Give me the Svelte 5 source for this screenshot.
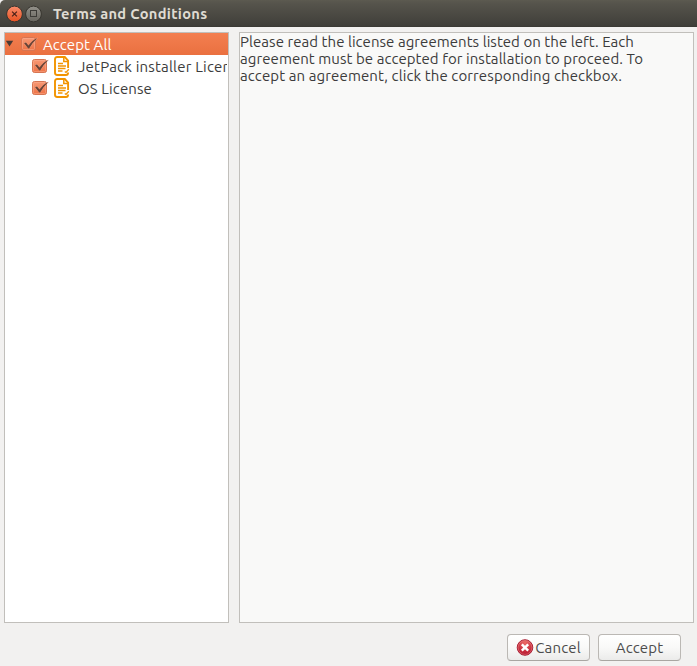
<script>
  const licenses = [
    { name: 'JetPack installer License', width: 168.5 },
    { name: 'OS License', width: 74 }
  ];
  const message = [
    { text: 'Please read the license agreements listed on the left. Each', width: 394 },
    { text: 'agreement must be accepted for installation to proceed. To', width: 403 },
    { text: 'accept an agreement, click the corresponding checkbox.', width: 382 }
  ];

  // Spreads the letters of a label over a given width.
  function fit(node, width) {
    const natural = node.getBoundingClientRect().width;
    node.style.letterSpacing = (width - natural) / node.textContent.length + 'px';
  }
</script>

{#snippet check()}
  <svg class="check" width="18" height="18" viewBox="0 0 18 18">
    <defs>
      <linearGradient id="box" x1="0" y1="0" x2="0" y2="1">
        <stop offset="0" stop-color="#f79a76" />
        <stop offset="1" stop-color="#ee7245" />
      </linearGradient>
    </defs>
    <rect x="0.5" y="2.5" width="14" height="13" rx="2" fill="url(#box)" stroke="#d67552" />
    <rect x="1.5" y="3.5" width="12" height="11" rx="1" fill="none" stroke="#fbb092" stroke-opacity=".5" />
    <path d="M3 8 L5 7.4 L7.5 10.6 Q11 5.4 16.4 3 Q11.6 7.4 8.1 13.4 L7.2 13.4 Z" fill="#684336" stroke="#f8b79e" stroke-opacity=".5" paint-order="stroke" />
  </svg>
{/snippet}

{#snippet page()}
  <svg class="page" width="16" height="20" viewBox="0 0 16 20" fill="none" stroke="#f29400">
    <path d="M14.1 12 V4.6 L10.8 1 H3.2 Q1 1 1 3.2 V16.8 Q1 19 3.2 19 H12 Q14.1 19 14.1 16.4" stroke-width="1.9" />
    <path d="M9.8 1 V5.4 H14" stroke-width="1.5" />
    <path d="M4 7.5 H9 M4 10 H12 M4 12.5 H11.5 M4 15 H8.5" stroke-width="1.3" />
    <path d="M10.8 15.5 L12 16.4 L14.8 13.2" stroke-width="1.3" />
  </svg>
{/snippet}

<div class="window">
  <header>
    <svg width="40" height="18" viewBox="0 0 40 18">
      <defs>
        <linearGradient id="close" x1="0" y1="0" x2="0" y2="1">
          <stop offset="0" stop-color="#f98c6b" />
          <stop offset="1" stop-color="#e75222" />
        </linearGradient>
        <linearGradient id="max" x1="0" y1="0" x2="0" y2="1">
          <stop offset="0" stop-color="#93918a" />
          <stop offset="1" stop-color="#67655e" />
        </linearGradient>
      </defs>
      <circle cx="9.5" cy="9" r="7.9" fill="url(#close)" stroke="#37352f" />
      <path d="M7.1 6.6 l4.8 4.8 M11.9 6.6 l-4.8 4.8" stroke="#4a2118" stroke-width="1.2" />
      <circle cx="28.5" cy="9" r="7.9" fill="url(#max)" stroke="#37352f" />
      <rect x="25.5" y="5.5" width="6" height="6" fill="none" stroke="#3c3b37" />
    </svg>
    <h1><span use:fit={154.5}>Terms and Conditions</span></h1>
  </header>

  <main>
    <section class="tree">
      <div class="row all">
        <svg class="arrow" width="9" height="7" viewBox="0 0 9 7"><path d="M.8 .8 H8.2 L4.5 6.5 Z" fill="#4b3a34" /></svg>
        {@render check()}
        <span class="label"><span use:fit={68.5}>Accept All</span></span>
      </div>
      {#each licenses as license}
        <div class="row child">
          {@render check()}
          {@render page()}
          <span class="label"><span use:fit={license.width}>{license.name}</span></span>
        </div>
      {/each}
    </section>
    <section class="text">
      {#each message as line}
        <div class="line"><span use:fit={line.width}>{line.text}</span></div>
      {/each}
    </section>
  </main>

  <footer>
    <button>
      <svg class="stop" width="18" height="18" viewBox="0 0 18 18">
        <defs>
          <radialGradient id="stop" cx=".5" cy=".2" r=".8">
            <stop offset="0" stop-color="#ec6a66" />
            <stop offset="1" stop-color="#b5102b" />
          </radialGradient>
        </defs>
        <circle cx="9" cy="8.5" r="7.8" fill="url(#stop)" stroke="#a5142a" stroke-width=".9" />
        <circle cx="9" cy="8.5" r="6.9" fill="none" stroke="#f0a09c" stroke-width=".6" stroke-opacity=".7" />
        <path d="M5.8 5.3 L12.2 11.7 M12.2 5.3 L5.8 11.7" stroke="#fff" stroke-width="2.4" />
      </svg>
      <span use:fit={45.5}>Cancel</span>
    </button>
    <button><span use:fit={47.5}>Accept</span></button>
  </footer>
</div>

<style>
  :global(body) { margin: 0; }
  .window {
    width: 697px;
    height: 666px;
    display: flex;
    flex-direction: column;
    box-sizing: border-box;
    overflow: hidden;
    background: #f2f1f0;
    color: #3c3c3c;
    font: 15px/22px Ubuntu, "Noto Sans", sans-serif;
    white-space: nowrap;
  }
  svg { display: block; flex: none; }
  header {
    height: 27px;
    flex: none;
    display: flex;
    align-items: center;
    padding-left: 5px;
    box-sizing: border-box;
    background: linear-gradient(#5c5a50, #56544c 12%, #403f3a 94%, #393833);
    border-radius: 5px 0 0 0;
  }
  h1 {
    margin: 0 0 0 8px;
    font-size: 14.67px;
    font-weight: 700;
    line-height: 26px;
    color: #dfdbd2;
  }
  main {
    flex: 1;
    display: flex;
    gap: 10px;
    padding: 5px 3px 0 4px;
  }
  .tree, .text {
    box-sizing: border-box;
    border: 1px solid #c1bfbb;
    overflow: hidden;
  }
  .tree { width: 225px; flex: none; background: #fff; padding-right: 1px; }
  .text { flex: 1; background: #f9f9f8; }
  .row { height: 22px; display: flex; align-items: center; overflow: hidden; }
  .label { padding-top: 1px; }
  .all {
    color: #fff;
    background: linear-gradient(#f37f50, #ea7040);
    margin-right: -1px;
  }
  .arrow { margin: 0 6.5px 2px 0; }
  .all .label { margin-left: 4.5px; }
  .child { padding-left: 26.5px; }
  .page { margin-left: 4.5px; }
  .child .label { margin-left: 8px; }
  .line { height: 17px; line-height: 17px; }
  footer {
    height: 43px;
    flex: none;
    display: flex;
    justify-content: flex-end;
    align-items: flex-start;
    gap: 8px;
    padding: 11px 16px 0 0;
    box-sizing: border-box;
  }
  button {
    width: 83px;
    height: 27px;
    padding: 0;
    display: flex;
    align-items: center;
    justify-content: center;
    border: 1px solid #bbb8b4;
    border-bottom-color: #a9a6a2;
    border-radius: 4px;
    background: linear-gradient(#fff, #f9f9f8 50%, #ebebea);
    color: #4c4c4c;
    font: inherit;
  }
  .stop { margin-right: 1px; }
</style>
